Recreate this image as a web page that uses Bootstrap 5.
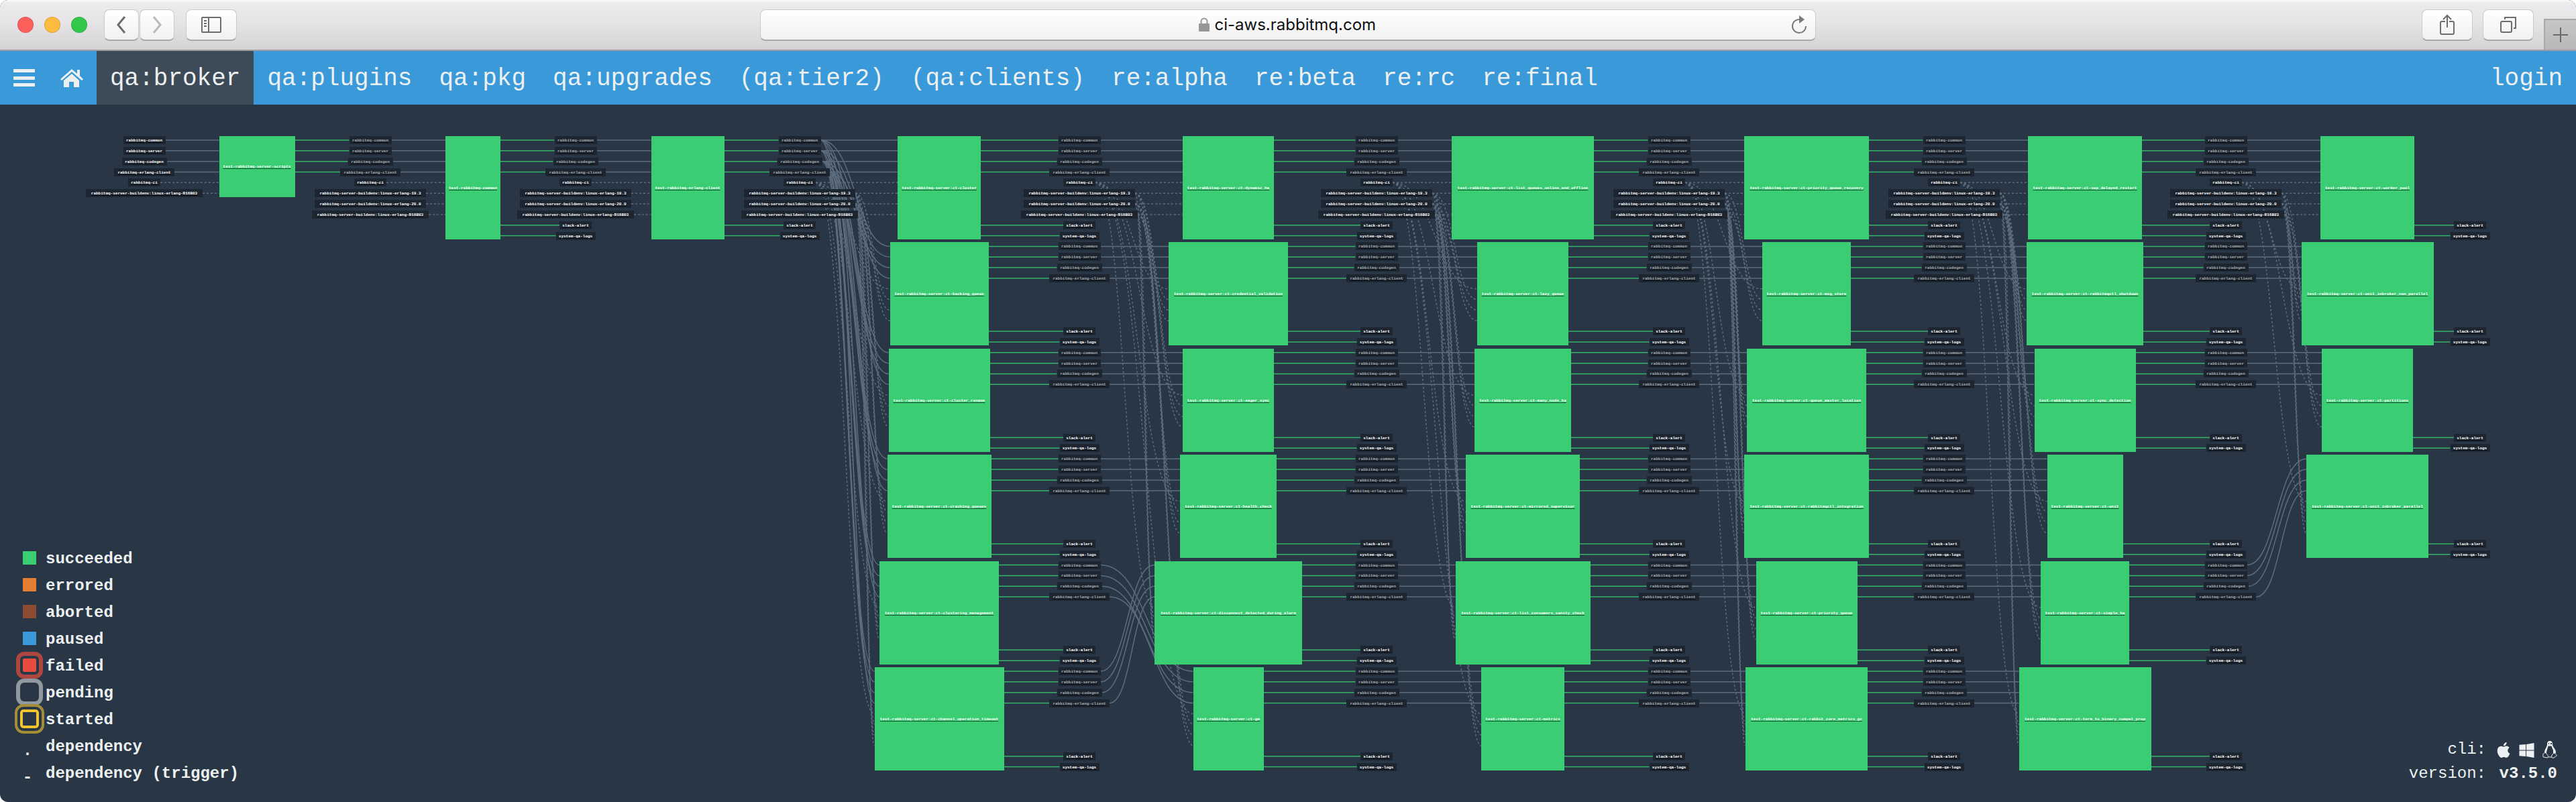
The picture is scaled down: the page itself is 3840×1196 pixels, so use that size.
<!DOCTYPE html>
<html lang="en">
<head>
<meta charset="utf-8">
<meta name="viewport" content="width=device-width, initial-scale=1">
<title>Concourse</title>
<link href="https://cdn.jsdelivr.net/npm/bootstrap@5.3.0/dist/css/bootstrap.min.css" rel="stylesheet">
<style>
  :root { --mono: "Liberation Mono", "Courier New", monospace; --ink: #ecf0f1; --night: #283645; --blue: #3a99d9; --green: #3acd74; }
  body { background: #fff; font-family: var(--mono); color: var(--ink); }
  .app-window { border-radius: 12px; overflow: hidden; background: var(--night); }

  .titlebar { height: 76px; border-bottom: 2px solid #9f9da0; background: linear-gradient(#fbfafb 0, #edebee 4px, #e6e4e7 32px, #d5d3d5 100%); }
  .titlebar .side { flex: 1 1 0; }
  .lights { gap: 16px; margin-left: 26px; }
  .light { width: 24px; height: 24px; border-radius: 50%; border: 1px solid rgba(0,0,0,.12); padding: 0; }
  .light-close { background: #fc605b; } .light-min { background: #fdbc40; } .light-zoom { background: #34c84a; }
  .history { gap: 1px; margin: 0 17px 0 25px; }
  .tool { height: 47px; border: 1px solid #cbc9cb; border-bottom: 2px solid #a9a7a9; border-radius: 8px; background: linear-gradient(#fff, #f1f1f1); padding: 0; }
  .tool svg { display: block; margin: auto; }
  .tool-half { width: 52px; }
  .tool-full { width: 76px; }
  .tools-right { gap: 15px; }
  .address { width: 41%; }
  .address label { margin-right: 7px; }
  .address input { width: 244px; height: 40px; border: 0; background: none; padding: 0; color: #111; font: 24px/40px Inter, "Liberation Sans", sans-serif; }
  .reload { margin-right: 11px; }
  .newtab { width: 48px; height: 46px; border: 0; border-top: 2px solid #a9a7aa; border-left: 2px solid #a9a7aa; background: linear-gradient(#c8c6c9, #b9b7ba); padding: 0; }

  .topnav { background: var(--blue); min-height: 80px; }
  .topnav a { display: flex; align-items: center; min-height: 80px; padding: 4px 20px 0; font-size: 36px; line-height: 40px; color: var(--ink); text-decoration: none; white-space: nowrap; }
  .topnav a.current { background: #3d4a57; }
  .topnav a.glyph { padding-top: 0; }
  .topnav a.glyph + a.glyph { padding-left: 18px; }

  .pipeline { display: block; width: 100%; height: auto; }
  .pipeline text { font: bold 6px var(--mono); text-anchor: middle; fill: #fff; }
  .pipeline rect { shape-rendering: crispEdges; }
  .pipeline .job rect { fill: var(--green); }
  .pipeline .res rect { fill: #1c2530; }
  .pipeline .passed text { fill: #a6acb0; }
  .pipeline path { fill: none; stroke: #5d6d7e; stroke-width: 1.5; }
  .pipeline path.out { stroke: #35b569; }
  .pipeline path.still { stroke-dasharray: 3 3; }

  .legend { left: 24px; bottom: 24px; font-size: 24px; line-height: 40px; }
  .legend dt, .legend dd { margin: 0; height: 40px; font-weight: bold; }
  .legend dt { width: 40px; margin-right: 4px; }
  .legend dd { padding-top: 2px; }
  .swatch { width: 20px; height: 20px; }
  .s-succeeded { background: var(--green); } .s-errored { background: #e67e31; }
  .s-aborted { background: #8f4b31; } .s-paused { background: var(--blue); }
  .s-failed { background: #e74c40; border-radius: 2px; outline: 6px solid #ad4541; outline-offset: 4px; }
  .s-pending { border-radius: 2px; outline: 6px solid #9099a0; outline-offset: 4px; }
  .s-started { width: 28px; height: 28px; border: 4px solid #f1c430; border-radius: 5px; outline: 4px solid #a48d38; outline-offset: 4px; }
  .sunk { padding: 8px 6px 0 0; }

  .about { right: 28px; bottom: 24px; font-size: 24px; line-height: 36px; }
  .about .val { width: 90px; margin-left: 16px; }
</style>
<script src="https://cdn.jsdelivr.net/npm/bootstrap@5.3.0/dist/js/bootstrap.bundle.min.js"></script>
</head>
<body>
<div class="app-window d-flex flex-column">

  <header class="titlebar d-flex">
    <div class="side d-flex align-items-center">
      <div class="lights d-flex">
        <button class="light light-close" aria-label="Close"></button>
        <button class="light light-min" aria-label="Minimise"></button>
        <button class="light light-zoom" aria-label="Zoom"></button>
      </div>
      <div class="history d-flex">
        <button class="tool tool-half" aria-label="Back"><svg width="20" height="26" viewBox="0 0 20 26" fill="none" stroke="#6d6d6d" stroke-width="3"><path d="M15 1 5 13l10 12"/></svg></button>
        <button class="tool tool-half" aria-label="Forward"><svg width="20" height="26" viewBox="0 0 20 26" fill="none" stroke="#b9b9b9" stroke-width="3"><path d="m5 1 10 12L5 25"/></svg></button>
      </div>
      <button class="tool tool-full" aria-label="Sidebar"><svg width="32" height="26" viewBox="0 0 32 26" fill="none" stroke="#6d6d6d" stroke-width="2"><rect x="2" y="2" width="28" height="22" rx="1"/><path d="M12 2v22M5 7h4M5 11h4M5 15h4"/></svg></button>
    </div>
    <form class="address d-flex align-items-center">
      <div class="tool w-100 d-flex align-items-center">
        <div class="side"></div>
        <label for="url" class="d-flex"><svg width="18" height="21" viewBox="0 0 18 21"><path d="M4.500 9V6a4.500 4.500 0 0 1 9 0v3" fill="none" stroke="#979797" stroke-width="2"/><rect x="1" y="9" width="16" height="12" rx="1" fill="#979797"/></svg></label>
        <input id="url" type="text" value="ci-aws.rabbitmq.com">
        <div class="side d-flex justify-content-end"><button type="button" class="btn reload p-0 border-0" aria-label="Reload"><svg width="26" height="28" viewBox="0 0 26 28"><path d="M14 6a10 10 0 1 0 9 10" fill="none" stroke="#7a7a7a" stroke-width="2"/><path d="M13 0v12l8-6z" fill="#7a7a7a"/></svg></button></div>
      </div>
    </form>
    <div class="side tools-right d-flex align-items-center justify-content-end">
      <button class="tool tool-full" aria-label="Share"><svg width="24" height="32" viewBox="0 0 24 32" fill="none" stroke="#6d6d6d" stroke-width="2"><path d="M9 11H4q-2 0-2 2v15q0 2 2 2h16q2 0 2-2V13q0-2-2-2h-5M12 20V2M6 8l6-6 6 6"/></svg></button>
      <button class="tool tool-full" aria-label="Show tabs"><svg width="26" height="26" viewBox="0 0 26 26" fill="none" stroke="#6d6d6d" stroke-width="2"><rect x="2" y="8" width="16" height="16" rx="2"/><path d="M8 5V2h16v16h-3"/></svg></button>
      <button class="newtab align-self-end" aria-label="New tab"><svg width="22" height="22" viewBox="0 0 22 22" stroke="#69676a" stroke-width="2"><path d="M11 0v22M0 11h22"/></svg></button>
    </div>
  </header>

  <nav class="topnav d-flex justify-content-between" aria-label="Groups">
    <div class="d-flex">
      <a href="#menu" class="glyph" aria-label="Menu"><svg width="32" height="26" viewBox="0 0 32 26" fill="#ecf0f1"><rect width="32" height="5" rx="1"/><rect y="11" width="32" height="5" rx="1"/><rect y="21" width="32" height="5" rx="1"/></svg></a>
      <a href="#home" class="glyph" aria-label="Home"><svg width="34" height="28" viewBox="0 0 34 28" fill="#ecf0f1"><path d="M17 1 0 16l2 2L17 5l15 13 2-2-5-5V2h-4v6z"/><path d="M17 8 5 18v10h8v-8h7v8h8V18z"/></svg></a>
      <a href="#broker" class="current" aria-current="page">qa:broker</a>
      <a href="#plugins">qa:plugins</a>
      <a href="#pkg">qa:pkg</a>
      <a href="#upgrades">qa:upgrades</a>
      <a href="#tier2">(qa:tier2)</a>
      <a href="#clients">(qa:clients)</a>
      <a href="#alpha">re:alpha</a>
      <a href="#beta">re:beta</a>
      <a href="#rc">re:rc</a>
      <a href="#final">re:final</a>
    </div>
    <a href="#login">login</a>
  </nav>

  <main class="position-relative">
    <svg class="pipeline" id="pipeline" viewBox="0 0 3840 1040" role="img" aria-label="qa:broker pipeline"></svg>

    <dl class="legend position-absolute mb-0">
      <div class="d-flex"><dt class="d-flex align-items-center justify-content-center"><div class="swatch s-succeeded"></div></dt><dd>succeeded</dd></div>
      <div class="d-flex"><dt class="d-flex align-items-center justify-content-center"><div class="swatch s-errored"></div></dt><dd>errored</dd></div>
      <div class="d-flex"><dt class="d-flex align-items-center justify-content-center"><div class="swatch s-aborted"></div></dt><dd>aborted</dd></div>
      <div class="d-flex"><dt class="d-flex align-items-center justify-content-center"><div class="swatch s-paused"></div></dt><dd>paused</dd></div>
      <div class="d-flex"><dt class="d-flex align-items-center justify-content-center"><div class="swatch s-failed"></div></dt><dd>failed</dd></div>
      <div class="d-flex"><dt class="d-flex align-items-center justify-content-center"><div class="swatch s-pending"></div></dt><dd>pending</dd></div>
      <div class="d-flex"><dt class="d-flex align-items-center justify-content-center"><div class="swatch s-started"></div></dt><dd>started</dd></div>
      <div class="d-flex"><dt class="sunk text-center">.</dt><dd>dependency</dd></div>
      <div class="d-flex"><dt class="sunk text-center">-</dt><dd>dependency (trigger)</dd></div>
    </dl>

    <div class="about position-absolute">
      <div class="d-flex justify-content-end">
        <span>cli:</span>
        <span class="val d-flex align-items-center justify-content-between">
          <a href="#darwin" class="d-flex" aria-label="macOS"><svg width="20" height="23" viewBox="1 0 14 16" fill="#ecf0f1"><path d="M11.182.008C11.148-.03 9.923.023 8.857 1.180c-1.066 1.156-.902 2.482-.878 2.516.024.034 1.520.087 2.475-1.258.955-1.345.762-2.391.728-2.430zm3.314 11.733c-.048-.096-2.325-1.234-2.113-3.422.212-2.189 1.675-2.789 1.698-2.854.023-.065-.597-.790-1.254-1.157a3.692 3.692 0 0 0-1.563-.434c-.108-.003-.483-.095-1.254.116-.508.139-1.653.589-1.968.607-.316.018-1.256-.522-2.267-.665-.647-.125-1.333.131-1.824.328-.490.196-1.422.754-2.074 2.237-.652 1.482-.311 3.830-.067 4.560.244.729.625 1.924 1.273 2.796.576.984 1.340 1.667 1.659 1.899.319.232 1.219.386 1.843.067.502-.308 1.408-.485 1.766-.472.357.013 1.061.154 1.782.539.571.197 1.111.115 1.652-.105.541-.221 1.324-1.059 2.238-2.758.347-.790.505-1.217.473-1.282z"/></svg></a>
          <a href="#windows" class="d-flex" aria-label="Windows"><svg width="23" height="23" viewBox="0 0 23 24" fill="#ecf0f1"><path d="M0 4l10-1v9H0zM11 3l12-2v11H11zM0 13h10v9L0 21zM11 13h12v11l-12-2z"/></svg></a>
          <a href="#linux" class="d-flex" aria-label="Linux"><svg width="22" height="26" viewBox="0 0 22 26"><path fill="#ecf0f1" d="M11 0c3 0 4 2 4 5 0 4 5 7 5 12l-1 2-3-1-1-4-2-5H9l-2 5-1 5-3-2c0-5 4-8 4-12 0-3 1-5 4-5z"/><path fill="#283645" d="M9 3h1v2H9zM12 3h2v2h-2zM9 7l2 1 2-1 3 7v6l-4 3H9l-3-4c0-3 1-7 3-12z"/><path fill="none" stroke="#ecf0f1" d="M4 17c-1 2-4 1-3 4 0 1-1 3 1 3l5 1c3-1 1-3 0-5zM17 18c2-1 2 2 4 3s-2 2-4 4c-3 1-4-1-3-4zM8 24h6"/></svg></a>
        </span>
      </div>
      <div class="d-flex justify-content-end"><span>version:</span><b class="val text-end">v3.5.0</b></div>
    </div>
  </main>
</div>

<script>
const svg = document.getElementById('pipeline');
const TOP = 47, ROW = 15.84, PREFIX = 'test-rabbitmq-server:ct-';

// columns alternate: resources, jobs, resources, jobs ...
const resX = [215, 552, 858, 1192, 1609, 2052, 2488, 2898, 3318, 3682];
const jobX = [383, 705, 1025, 1400, 1831, 2270, 2693, 3108, 3529];
const jobs = [
  ['test-rabbitmq-server-scripts'], ['test-rabbitmq-common'], ['test-rabbitmq-erlang-client'],
  ['cluster', 'backing_queue', 'cluster_rename', 'crashing_queues', 'clustering_management', 'channel_operation_timeout'],
  ['dynamic_ha', 'credential_validation', 'eager_sync', 'health_check', 'disconnect_detected_during_alarm', 'gm'],
  ['list_queues_online_and_offline', 'lazy_queue', 'many_node_ha', 'mirrored_supervisor', 'list_consumers_sanity_check', 'metrics'],
  ['priority_queue_recovery', 'msg_store', 'queue_master_location', 'rabbitmqctl_integration', 'priority_queue', 'rabbit_core_metrics_gc'],
  ['sup_delayed_restart', 'rabbitmqctl_shutdown', 'sync_detection', 'unit', 'simple_ha', 'term_to_binary_compat_prop'],
  ['worker_pool', 'unit_inbroker_non_parallel', 'partitions', 'unit_inbroker_parallel']
].map((col, i) => i < 3 ? col : col.map(n => PREFIX + n));

const repos = ['rabbitmq-common', 'rabbitmq-server', 'rabbitmq-codegen', 'rabbitmq-erlang-client'];
const env = v => 'rabbitmq-server-buildenv:linux-erlang-' + v;
const fixed = ['rabbitmq-ci', env('19.3'), env('20.0'), env('R16B03')];
const alerts = ['slack-alert', 'system-qa-logs'];

const boxWidth = name => Math.round(name.length * 3.82 + 6);
const lineY = k => TOP + 6 + k * ROW;
const edges = [], boxes = [];

function box(cls, name, cx, k, rows) {
  const w = boxWidth(name), x = Math.round(cx - w / 2), y = TOP + Math.round(k * ROW);
  const h = rows ? Math.floor((rows - 1) * ROW) + 12 : 12;
  boxes.push(`<a href="#${name}" class="${cls}"><rect x="${x}" y="${y}" width="${w}" height="${h}"/><text x="${cx}" y="${Math.floor(y + h / 2) + 2}">${name}</text></a>`);
}
function edge(cls, x1, k1, x2, k2) {
  const m = (x1 + x2) / 2, a = lineY(k1), b = lineY(k2);
  edges.push(`<path class="${cls}" d="M${x1} ${a}C${m} ${a} ${m} ${b} ${x2} ${b}"/>`);
}
const rightOf = (name, c) => resX[c] + boxWidth(name) / 2;
const leftOfJob = (c, r) => jobX[c] - boxWidth(jobs[c][r]) / 2;

// rows of the next job column that a resource row feeds
function targets(c, r) {
  if (c === 3) return [0, 1, 2, 3, 4, 5];
  if (c === 4 && r > 3) return [9 - r];
  if (c === 8 && r === 4) return [3];
  return [r];
}

for (let c = 0; c < resX.length; c++) {
  const next = jobs[c], prev = jobs[c - 1];
  const groups = c === 0 ? 1 : prev.length;
  for (let r = 0; r < groups; r++) {
    const k0 = r * 10;
    const passes = c < 9 && !(c === 8 && (r === 3 || r === 5));
    const jobRight = c ? jobX[c - 1] + boxWidth(prev[r]) / 2 : 0;
    if (passes) repos.forEach((n, i) => {
      targets(c, r).forEach(t => edge('trig', rightOf(n, c), k0 + i, leftOfJob(c, t), t * 10 + i));
      if (c) edge('out', jobRight, k0 + i, resX[c] - boxWidth(n) / 2, k0 + i);
      box(c ? 'res passed' : 'res', n, resX[c], k0 + i);
    });
    if (next && r === 0) (c ? fixed : [fixed[0], fixed[3]]).forEach((n, i) => {
      next.forEach((_, t) => edge('still', rightOf(n, c), 4 + i, leftOfJob(c, t), t * 10 + 4 + i));
      box('res', n, resX[c], 4 + i);
    });
    if (c > 1) alerts.forEach((n, i) => {
      edge('out', jobRight, k0 + 8 + i, resX[c] - boxWidth(n) / 2, k0 + 8 + i);
      box('res', n, resX[c], k0 + 8 + i);
    });
  }
  if (next) next.forEach((n, r) => box('job', n, jobX[c], r * 10, c ? 10 : 6));
}
svg.innerHTML = edges.join('') + boxes.join('');
</script>
</body>
</html>
